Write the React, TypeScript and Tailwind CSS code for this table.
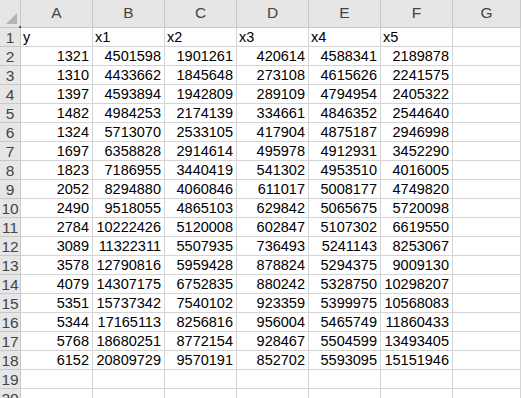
const cols = ['A', 'B', 'C', 'D', 'E', 'F', 'G'];

const rows: (string | number)[][] = [
  ['y', 'x1', 'x2', 'x3', 'x4', 'x5'],
  [1321, 4501598, 1901261, 420614, 4588341, 2189878],
  [1310, 4433662, 1845648, 273108, 4615626, 2241575],
  [1397, 4593894, 1942809, 289109, 4794954, 2405322],
  [1482, 4984253, 2174139, 334661, 4846352, 2544640],
  [1324, 5713070, 2533105, 417904, 4875187, 2946998],
  [1697, 6358828, 2914614, 495978, 4912931, 3452290],
  [1823, 7186955, 3440419, 541302, 4953510, 4016005],
  [2052, 8294880, 4060846, 611017, 5008177, 4749820],
  [2490, 9518055, 4865103, 629842, 5065675, 5720098],
  [2784, 10222426, 5120008, 602847, 5107302, 6619550],
  [3089, 11322311, 5507935, 736493, 5241143, 8253067],
  [3578, 12790816, 5959428, 878824, 5294375, 9009130],
  [4079, 14307175, 6752835, 880242, 5328750, 10298207],
  [5351, 15737342, 7540102, 923359, 5399975, 10568083],
  [5344, 17165113, 8256816, 956004, 5465749, 11860433],
  [5768, 18680251, 8772154, 928467, 5504599, 13493405],
  [6152, 20809729, 9570191, 852702, 5593095, 15151946],
  [],
  [],
];

function Corner() {
  return (
    <div className="relative h-[28px] w-[21px] shrink-0 border-b border-r border-[#c8c8c8] bg-[#e6e6e6]">
      <svg className="absolute bottom-[3px] right-[3px]" width="11" height="11" viewBox="0 0 11 11">
        <polygon points="11,0 11,11 0,11" fill="#b4b4b4" />
      </svg>
      <div className="absolute bottom-[-1px] right-[-1px] h-[2px] w-[2px] bg-[#217346]" />
    </div>
  );
}

export default function App() {
  return (
    <div
      className="h-[398px] w-[521px] overflow-hidden bg-white text-[14.5px] text-black"
      style={{ fontFamily: '"Liberation Sans", "Noto Sans CJK SC", sans-serif' }}
    >
      <div className="flex">
        <Corner />
        {cols.map((c) => (
          <div
            key={c}
            className={
              c === 'G'
                ? 'flex h-[28px] flex-1 items-end justify-center border-b border-r border-[#c8c8c8] bg-[#e6e6e6] pb-[3px] text-[15.5px] text-[#444]'
                : 'flex h-[28px] w-[72px] shrink-0 items-end justify-center border-b border-r border-[#c8c8c8] bg-[#e6e6e6] pb-[3px] text-[15.5px] text-[#444]'
            }
          >
            {c}
          </div>
        ))}
      </div>
      {rows.map((r, i) => (
        <div key={i} className="flex">
          <div className="flex h-[19px] w-[21px] shrink-0 items-center justify-center overflow-visible border-b border-r border-[#c8c8c8] bg-[#e6e6e6] pt-[1px] text-[15.5px] leading-none text-[#444]">
            {i + 1}
          </div>
          {cols.map((c, j) => {
            const v = r[j];
            const num = typeof v === 'number';
            return (
              <div
                key={c}
                className={
                  c === 'G'
                    ? 'h-[19px] flex-1 border-b border-r border-[#d4d4d4]'
                    : num
                      ? 'flex h-[19px] w-[72px] shrink-0 items-center justify-end border-b border-r border-[#d4d4d4] pr-[3px] pt-[1px] leading-none'
                      : 'flex h-[19px] w-[72px] shrink-0 items-center border-b border-r border-[#d4d4d4] pl-[2px] pt-[1px] leading-none'
                }
              >
                {v ?? ''}
              </div>
            );
          })}
        </div>
      ))}
    </div>
  );
}
